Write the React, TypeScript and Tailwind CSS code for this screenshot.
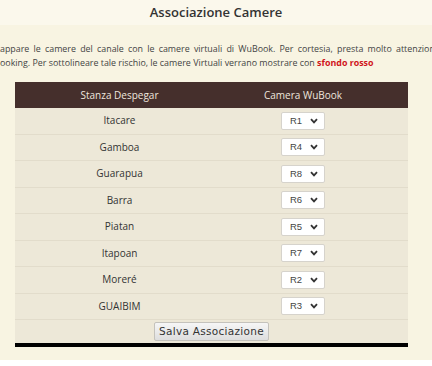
const rooms = [
  { name: "Itacare", value: "R1" },
  { name: "Gamboa", value: "R4" },
  { name: "Guarapua", value: "R8" },
  { name: "Barra", value: "R6" },
  { name: "Piatan", value: "R5" },
  { name: "Itapoan", value: "R7" },
  { name: "Moreré", value: "R2" },
  { name: "GUAIBIM", value: "R3" },
];

function RoomSelect({ value }: { value: string }) {
  return (
    <div className="flex h-[18px] w-[44px] items-center justify-between rounded-[2px] border border-[#d6d3cc] bg-white pl-[8px] pr-[6px] font-['Liberation_Sans',sans-serif] text-[9.5px] text-[#444]">
      <span>{value}</span>
      <svg width="8" height="6" viewBox="0 0 8 6" fill="none">
        <path d="M1 1.2 4 4.4 7 1.2" stroke="#333" strokeWidth="1.8" />
      </svg>
    </div>
  );
}

export default function App() {
  return (
    <div className="flex h-[366px] w-[432px] flex-col overflow-hidden bg-white font-['Open_Sans',sans-serif]">
      <div className="flex h-[25px] shrink-0 items-center justify-center bg-[#fbf8ec]">
        <h1 className="text-[13px] font-semibold text-[#333]">Associazione Camere</h1>
      </div>

      <div className="flex h-[335px] shrink-0 flex-col bg-[#f8f4e2]">
        <div className="mt-[17px] overflow-hidden text-[8.9px] leading-[13.5px] text-[#444]">
          <p className="whitespace-nowrap [word-spacing:1.9px]">
            appare le camere del canale con le camere virtuali di WuBook. Per cortesia, presta molto attenzione a non creare
          </p>
          <p className="whitespace-nowrap">
            ooking. Per sottolineare tale rischio, le camere Virtuali verrano mostrare con{" "}
            <span className="font-bold text-[#d0151b]">sfondo rosso</span>
          </p>
        </div>

        <div className="ml-[15px] mt-[13px] w-[393px] border-b-[4px] border-black">
          <div className="grid h-[26px] grid-cols-[209px_158px_1fr] items-center bg-[#452f2c] text-center text-[10px] text-[#eee6de]">
            <span>Stanza Despegar</span>
            <span>Camera WuBook</span>
          </div>
          {rooms.map((r) => (
            <div
              key={r.name}
              className="grid h-[26.5px] grid-cols-[209px_158px_1fr] items-center border-b border-[#e2dccb] bg-[#ede8d8] text-center text-[10px] text-[#333]"
            >
              <span>{r.name}</span>
              <div className="flex justify-center">
                <RoomSelect value={r.value} />
              </div>
            </div>
          ))}
          <div className="flex h-[23px] items-center justify-center bg-[#ede8d8]">
            <button className="h-[19px] w-[115px] rounded-[2px] border border-[#c4c2bc] bg-gradient-to-b from-[#f6f6f6] to-[#dedede] font-['DejaVu_Sans',sans-serif] text-[10.5px] tracking-[0.3px] text-[#333]">
              Salva Associazione
            </button>
          </div>
        </div>
      </div>
    </div>
  );
}
